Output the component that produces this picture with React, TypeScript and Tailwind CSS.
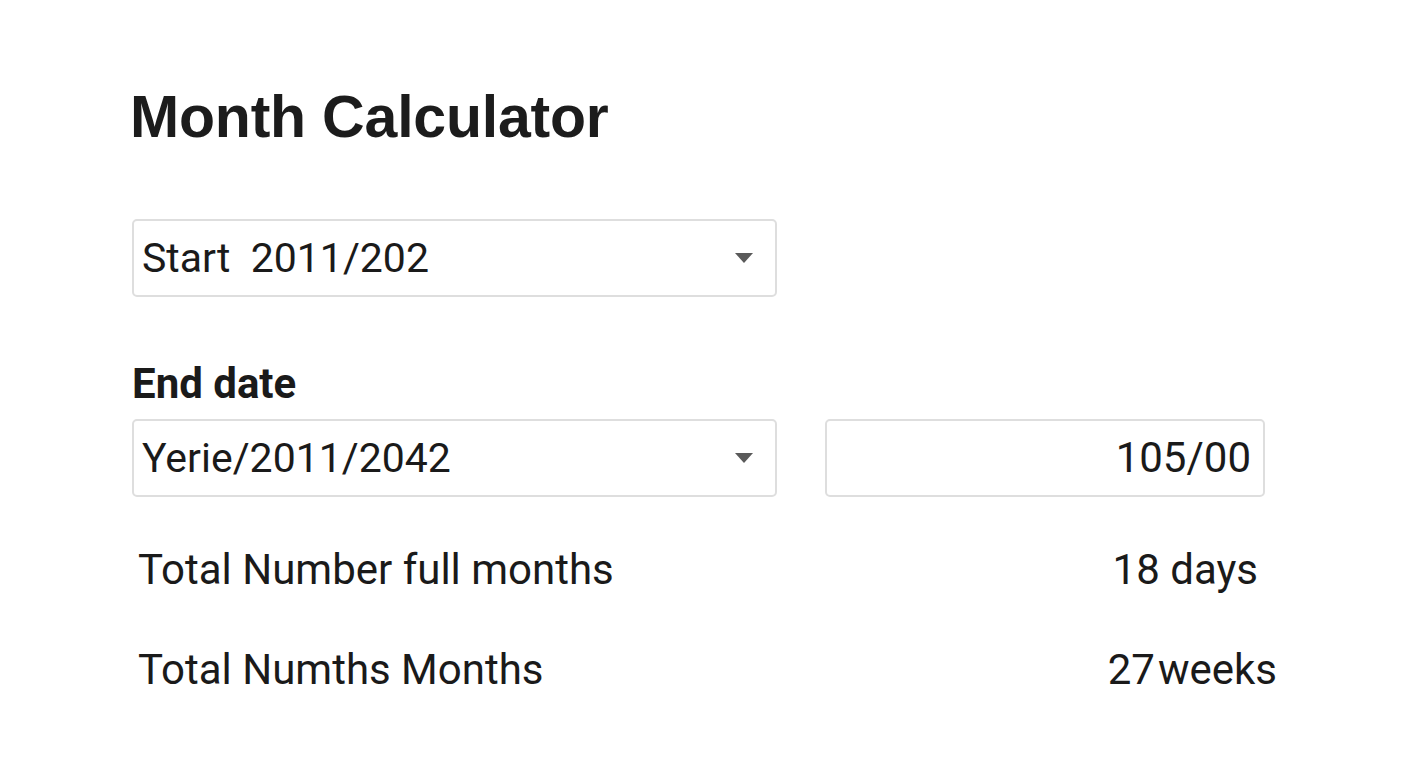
import React from "react";

function Caret() {
  return (
    <svg width="18" height="10" viewBox="0 0 18 10" className="shrink-0">
      <path d="M0 0 H18 L9 10 Z" fill="#5a5a5a" />
    </svg>
  );
}

function SelectBox({ value }: { value: string }) {
  return (
    <div className="flex h-[78px] w-[645px] items-center justify-between rounded-[5px] border-2 border-[#dedede] bg-white pl-[8px] pr-[22px]">
      <span className="whitespace-pre text-[41px] leading-none text-[#1a1a1a]">{value}</span>
      <Caret />
    </div>
  );
}

export default function App() {
  return (
    <div
      className="min-h-[768px] w-full bg-white pl-[130px] pt-[82px] text-[#1a1a1a]"
      style={{ fontFamily: "Roboto, 'Noto Sans', sans-serif" }}
    >
      <h1
        className="text-[59px] font-bold leading-[70px] tracking-[-0.2px] text-[#1c1c1c]"
        style={{ fontFamily: "'Liberation Sans', Arial, sans-serif" }}
      >
        Month Calculator
      </h1>

      <div className="ml-[2px] mt-[67px]">
        <SelectBox value="Start  2011/202" />
      </div>

      <div className="ml-[2px] mt-[67px] text-[42px] font-bold leading-[40px]">End date</div>

      <div className="ml-[2px] mt-[15px] flex gap-[48px]">
        <SelectBox value="Yerie/2011/2042" />
        <div className="flex h-[78px] w-[440px] items-center justify-end rounded-[5px] border-2 border-[#dedede] bg-white pr-[12px]">
          <span className="text-[42px] leading-none">105/00</span>
        </div>
      </div>

      <div className="ml-[8px] mt-[48px] flex w-[1120px] items-center justify-between text-[42px] leading-[50px]">
        <span>Total Number full months</span>
        <span>18 days</span>
      </div>

      <div className="ml-[8px] mt-[50px] flex w-[1139px] items-center justify-between text-[42px] leading-[50px]">
        <span>Total Numths Months</span>
        <span>
          27<span className="ml-[3px]">weeks</span>
        </span>
      </div>
    </div>
  );
}
